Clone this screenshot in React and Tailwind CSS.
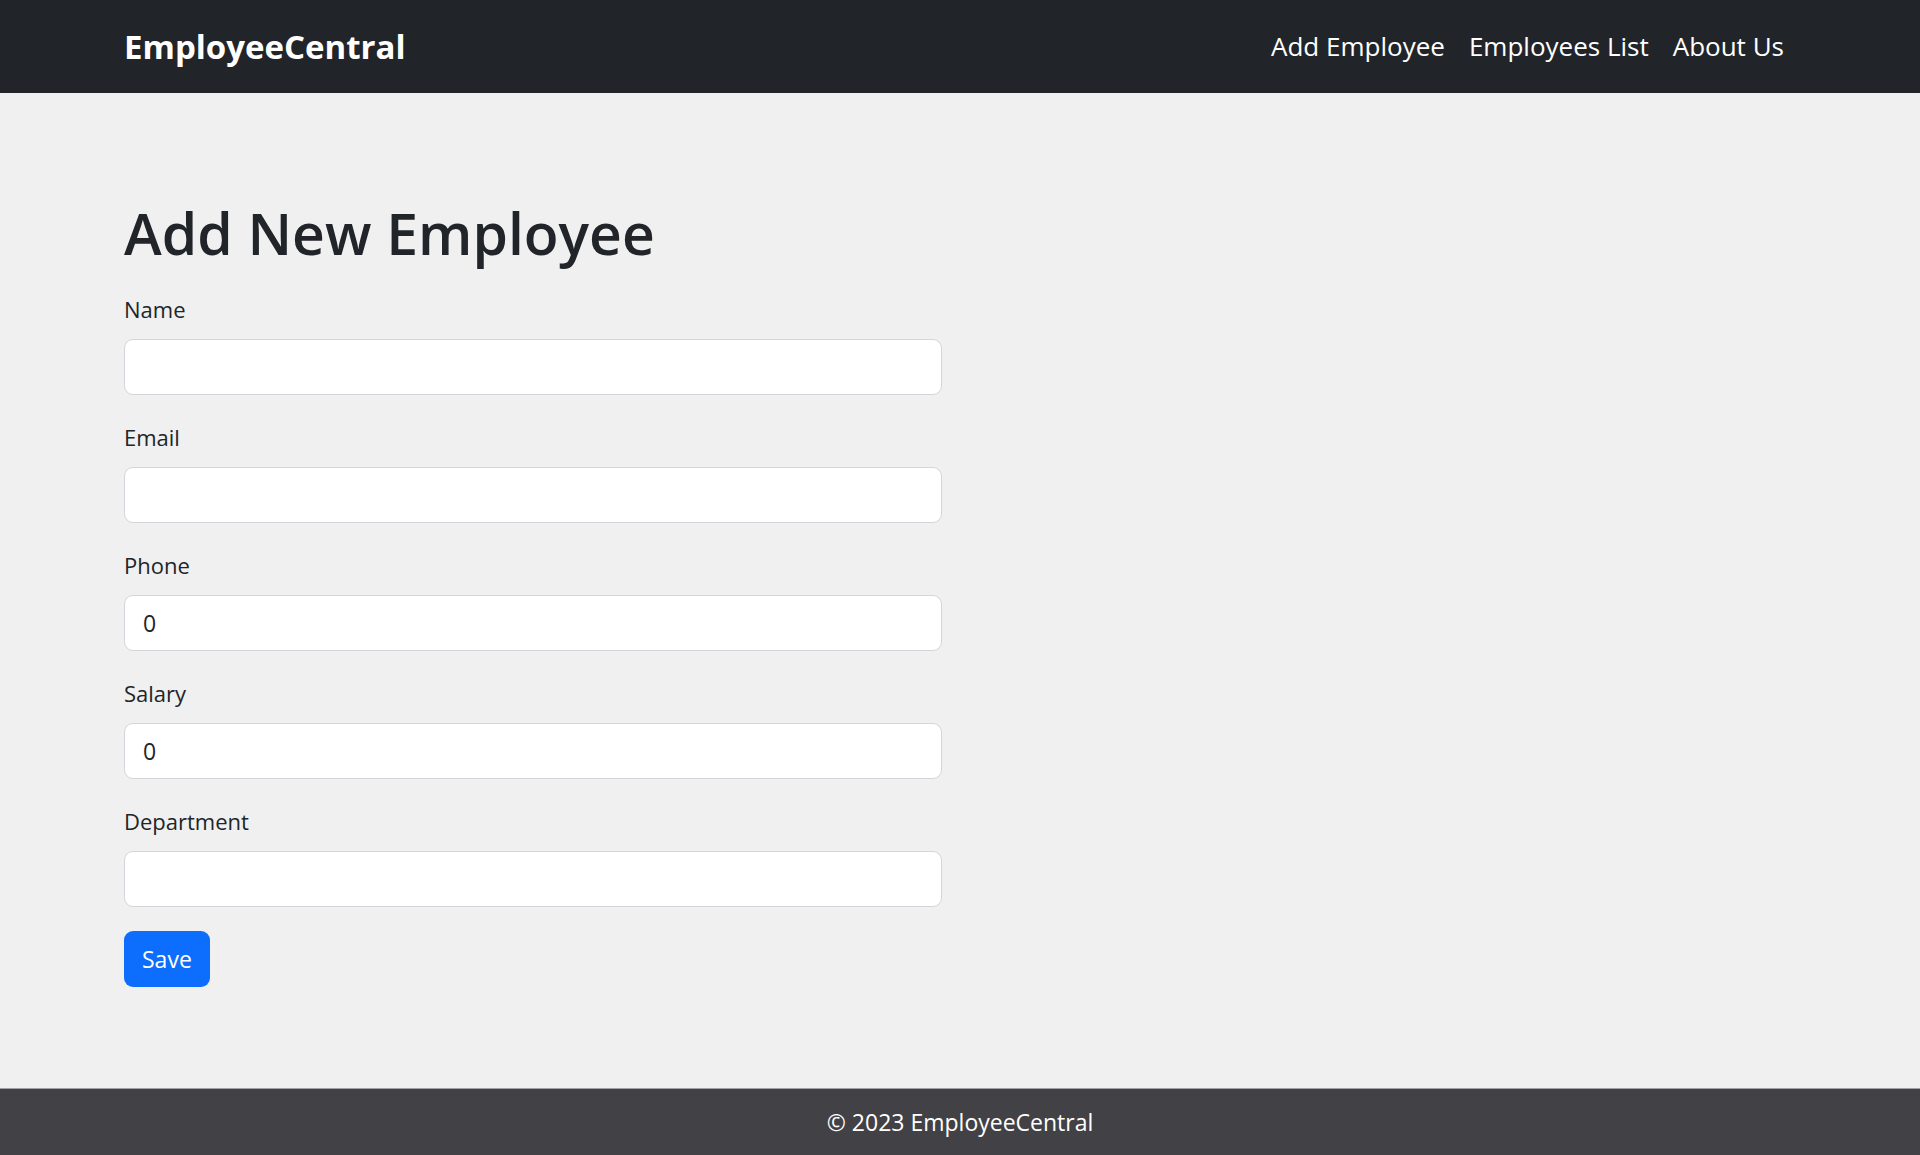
import React, { useState } from "react";

const fields = [
    { id: "name", label: "Name", value: "" },
    { id: "email", label: "Email", value: "" },
    { id: "phone", label: "Phone", value: "0" },
    { id: "salary", label: "Salary", value: "0" },
    { id: "department", label: "Department", value: "" },
];

function Navbar() {
    return (
        <nav className="bg-[#212529] h-[93px] flex items-center justify-between px-[124px]">
            <a href="#" className="text-white font-bold text-[33px] leading-none">
                EmployeeCentral
            </a>
            <ul className="flex items-center">
                <li><a href="#" className="block px-3 text-white text-[26px]">Add Employee</a></li>
                <li><a href="#" className="block px-3 text-white text-[26px]">Employees List</a></li>
                <li><a href="#" className="block px-3 text-white text-[26px]">About Us</a></li>
            </ul>
        </nav>
    );
}

export default function App() {
    const [form, setForm] = useState(
        Object.fromEntries(fields.map((f) => [f.id, f.value]))
    );

    return (
        <div
            className="min-h-screen flex flex-col bg-[#f0f0f0] text-[#212529]"
            style={{ fontFamily: '"Open Sans", "Noto Sans", sans-serif' }}
        >
            <Navbar />

            <main className="flex-1 px-[124px] pt-[114px]">
                <h1 className="text-[57px] leading-[52px] font-semibold mb-[32px]">Add New Employee</h1>

                <form className="w-[818px]" onSubmit={(e) => e.preventDefault()}>
                    {fields.map((f) => (
                        <div key={f.id} className="mb-6">
                            <label htmlFor={f.id} className="block text-[22px] leading-[36px] mb-3">
                                {f.label}
                            </label>
                            <input
                                id={f.id}
                                value={form[f.id]}
                                onChange={(e) => setForm({ ...form, [f.id]: e.target.value })}
                                className="block w-full h-[56px] px-[18px] text-[23px] bg-white border border-[#d3d5da] rounded-[9px] outline-none"
                            />
                        </div>
                    ))}
                    <button
                        type="submit"
                        className="h-[56px] px-[18px] text-[23px] text-white bg-[#0d6efd] rounded-[9px]"
                    >
                        Save
                    </button>
                </form>
            </main>

            {/* Footer */}
            <footer className="h-[67px] bg-[#424146] border-t border-[#a3a3a6] flex items-center justify-center text-white text-[23px]">
                © 2023 EmployeeCentral
            </footer>
        </div>
    );
}
